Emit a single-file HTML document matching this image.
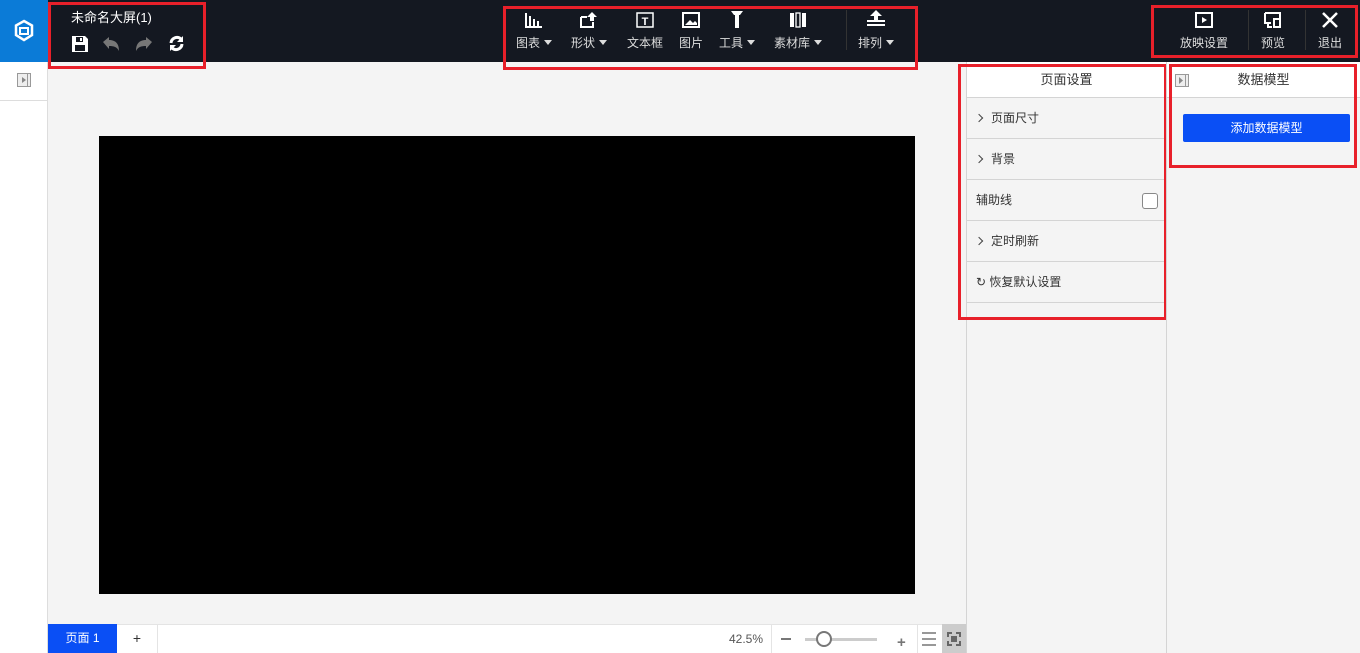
<!DOCTYPE html>
<html><head><meta charset="utf-8"><style>
*{margin:0;padding:0;box-sizing:border-box}
body{width:1360px;height:653px;overflow:hidden;background:#f4f4f4;font-family:"Liberation Sans","Noto Sans CJK SC",sans-serif;font-size:12px;color:#333;position:relative}
.a{position:absolute}
.top{left:0;top:0;width:1360px;height:62px;background:#141821}
.red{position:absolute;border:3px solid #e8202a}
.tb{position:absolute;top:12px;color:#ddd;font-size:12px;text-align:center}
.tb svg{display:block;margin:0 auto 6px}
.tri{display:inline-block;width:0;height:0;border-left:4px solid transparent;border-right:4px solid transparent;border-top:5px solid #ddd;margin-left:4px;vertical-align:2px}
.row{position:absolute;left:967px;width:199px;height:41px;border-bottom:1px solid #d4d4d4;line-height:40px;padding-left:9px;font-size:12px;color:#333}
.chev{display:inline-block;width:6px;height:6px;border-right:1.5px solid #444;border-top:1.5px solid #444;transform:rotate(45deg);margin:0 9px 1px 0}
</style></head><body>
<div class="a top"></div>
<div class="a" style="left:0;top:0;width:48px;height:62px;background:#0b7bd7"></div>
<svg class="a" style="left:13px;top:19px" width="22" height="24" viewBox="0 0 22 24"><path d="M11 2L19 6.5V16L11 21L3 16V6.5Z" fill="none" stroke="#fff" stroke-width="2.5"/><path d="M7 9h8v6H7z" fill="none" stroke="#fff" stroke-width="2"/></svg>
<div class="a" style="left:0;top:62px;width:48px;height:591px;background:#fff;border-right:1px solid #ddd"></div>
<div class="a" style="left:0;top:100px;width:48px;height:1px;background:#ddd"></div>
<svg class="a" style="left:17px;top:73px" width="14" height="14"><rect x="0.5" y="0.5" width="13" height="13" fill="#eee" stroke="#999"/><path d="M5 4l4 3-4 3z" fill="#888"/><line x1="10.5" y1="1" x2="10.5" y2="13" stroke="#999"/></svg>
<div class="a" style="left:71px;top:7px;color:#fff;font-size:13px">未命名大屏(1)</div>
<svg class="a" style="left:71px;top:35px" width="18" height="18"><path d="M1 1h13l3 3v13H1z" fill="#fff"/><rect x="5" y="2" width="7" height="5" fill="#141821"/><rect x="9" y="3" width="2" height="3" fill="#fff"/><rect x="4" y="10" width="10" height="6" fill="#141821"/></svg>
<svg class="a" style="left:102px;top:36px" width="18" height="16"><path d="M1 6l6-5v3c6 0 10 3 10 11-2-4-5-5-10-5v3z" fill="#777"/></svg>
<svg class="a" style="left:135px;top:36px" width="18" height="16"><path d="M17 6l-6-5v3C5 4 1 7 1 15c2-4 5-5 10-5v3z" fill="#777"/></svg>
<svg class="a" style="left:168px;top:35px" width="17" height="17"><path d="M3 8a6 6 0 0 1 10-4" fill="none" stroke="#fff" stroke-width="3"/><path d="M14 9a6 6 0 0 1-10 4" fill="none" stroke="#fff" stroke-width="3"/><path d="M15 1v6H9z M2 16v-6h6z" fill="#fff"/></svg>
<div class="red" style="left:48px;top:2px;width:158px;height:67px"></div>

<div class="tb" style="left:516px"><svg width="18" height="16"><path d="M1 1v14h16" stroke="#fff" stroke-width="2" fill="none"/><rect x="4" y="4" width="2" height="10" fill="#fff"/><rect x="8" y="7" width="2" height="7" fill="#fff"/><rect x="12" y="9" width="2" height="5" fill="#fff"/></svg>图表<span class="tri"></span></div>
<div class="tb" style="left:571px"><svg width="18" height="16"><path d="M1 5h6M1 5v10h12v-5" stroke="#fff" stroke-width="2" fill="none"/><path d="M7 5l5-5 5 5h-3v4h-4V5z" fill="#fff"/></svg>形状<span class="tri"></span></div>
<div class="tb" style="left:627px"><svg width="20" height="16"><rect x="2" y="1" width="16" height="14" fill="none" stroke="#fff" stroke-width="1.5"/><text x="10" y="13" fill="#fff" font-size="11" font-weight="bold" text-anchor="middle" font-family="Liberation Sans">T</text></svg>文本框</div>
<div class="tb" style="left:679px"><svg width="18" height="16"><rect x="1" y="1" width="16" height="14" fill="none" stroke="#fff" stroke-width="2"/><path d="M3 13l5-5 3 3 2-2 2 2v2z" fill="#fff"/></svg>图片</div>
<div class="tb" style="left:719px;top:10px"><svg width="18" height="18" style="margin-bottom:6px"><path d="M3 1h12l-3 4H6z M7 5h4v13H7z" fill="#fff"/></svg>工具<span class="tri"></span></div>
<div class="tb" style="left:774px"><svg width="18" height="16"><rect x="1" y="1" width="4" height="14" fill="#fff"/><rect x="7" y="1" width="4" height="14" fill="none" stroke="#fff" stroke-width="1.3"/><rect x="13" y="1" width="4" height="14" fill="#fff"/></svg>素材库<span class="tri"></span></div>
<div class="a" style="left:846px;top:10px;width:1px;height:40px;background:#333"></div>
<div class="tb" style="left:858px;top:10px"><svg width="20" height="18"><path d="M10 0l6 6h-4v4h-4V6H4z" fill="#fff"/><rect x="1" y="10" width="18" height="2" fill="#fff"/><rect x="1" y="14" width="18" height="2" fill="#fff"/></svg>排列<span class="tri"></span></div>
<div class="red" style="left:503px;top:6px;width:415px;height:64px"></div>

<div class="tb" style="left:1180px"><svg width="18" height="16"><rect x="1" y="1" width="16" height="14" fill="none" stroke="#fff" stroke-width="2"/><path d="M7 5l5 3-5 3z" fill="#fff"/></svg>放映设置</div>
<div class="a" style="left:1248px;top:10px;width:1px;height:40px;background:#333"></div>
<div class="tb" style="left:1261px"><svg width="18" height="16"><path d="M1 1h15v6M1 1v10h6M4 11v4h4" fill="none" stroke="#fff" stroke-width="2"/><rect x="10" y="7" width="6" height="8" fill="none" stroke="#fff" stroke-width="2"/></svg>预览</div>
<div class="a" style="left:1305px;top:10px;width:1px;height:40px;background:#333"></div>
<div class="tb" style="left:1318px"><svg width="18" height="16"><path d="M2 1l14 14M16 1L2 15" stroke="#fff" stroke-width="2.5"/></svg>退出</div>
<div class="red" style="left:1151px;top:5px;width:207px;height:53px"></div>

<div class="a" style="left:99px;top:136px;width:816px;height:458px;background:#000"></div>

<div class="a" style="left:966px;top:62px;width:1px;height:591px;background:#d4d4d4"></div>
<div class="a" style="left:967px;top:62px;width:199px;height:36px;background:#fff;border-bottom:1px solid #d4d4d4;text-align:center;line-height:36px;font-size:13px">页面设置</div>
<div class="row" style="top:98px"><span class="chev"></span>页面尺寸</div>
<div class="row" style="top:139px"><span class="chev"></span>背景</div>
<div class="row" style="top:180px">辅助线<span class="a" style="left:175px;top:13px;width:16px;height:16px;border:1px solid #888;border-radius:3px;background:#fff"></span></div>
<div class="row" style="top:221px"><span class="chev"></span>定时刷新</div>
<div class="row" style="top:262px">↻ 恢复默认设置</div>
<div class="red" style="left:958px;top:64px;width:209px;height:256px"></div>

<div class="a" style="left:1166px;top:62px;width:1px;height:591px;background:#d4d4d4"></div>
<div class="a" style="left:1167px;top:62px;width:193px;height:36px;background:#fff;border-bottom:1px solid #d4d4d4;text-align:center;line-height:36px;font-size:13px">数据模型</div>
<svg class="a" style="left:1175px;top:74px" width="14" height="13"><rect x="0.5" y="0.5" width="13" height="12" fill="#eee" stroke="#999"/><path d="M4 3l4 3.5-4 3.5z" fill="#888"/><line x1="10.5" y1="1" x2="10.5" y2="12" stroke="#999"/></svg>
<div class="a" style="left:1183px;top:114px;width:167px;height:28px;background:#0a4ff5;border-radius:2px;color:#fff;text-align:center;line-height:28px;font-size:12px">添加数据模型</div>
<div class="red" style="left:1169px;top:64px;width:188px;height:104px"></div>

<div class="a" style="left:48px;top:624px;width:918px;height:29px;background:#fff;border-top:1px solid #e4e4e4"></div>
<div class="a" style="left:48px;top:624px;width:69px;height:29px;background:#0a4ff5;color:#fff;text-align:center;line-height:29px">页面 1</div>
<div class="a" style="left:117px;top:624px;width:41px;height:29px;border-right:1px solid #e4e4e4;text-align:center;line-height:29px;font-size:14px">+</div>
<div class="a" style="left:729px;top:632px;color:#555">42.5%</div>
<div class="a" style="left:771px;top:624px;width:1px;height:29px;background:#e4e4e4"></div>
<div class="a" style="left:781px;top:638px;width:10px;height:2px;background:#777"></div>
<div class="a" style="left:805px;top:638px;width:72px;height:3px;background:#ccc"></div>
<div class="a" style="left:816px;top:631px;width:16px;height:16px;border:2px solid #777;border-radius:50%;background:#fff"></div>
<div class="a" style="left:897px;top:634px;font-size:15px;color:#777;font-weight:bold">+</div>
<div class="a" style="left:917px;top:624px;width:1px;height:29px;background:#e4e4e4"></div>
<svg class="a" style="left:922px;top:632px" width="14" height="14"><path d="M0 1h14M0 13h14M0 7h14" stroke="#777" stroke-width="1.5"/></svg>
<div class="a" style="left:942px;top:624px;width:24px;height:29px;background:#ccc"></div>
<svg class="a" style="left:947px;top:632px" width="14" height="14"><path d="M1 5V1h4M9 1h4v4M13 9v4H9M5 13H1V9" stroke="#666" stroke-width="2" fill="none"/><rect x="4" y="4" width="6" height="6" fill="#666"/></svg>
</body></html>
